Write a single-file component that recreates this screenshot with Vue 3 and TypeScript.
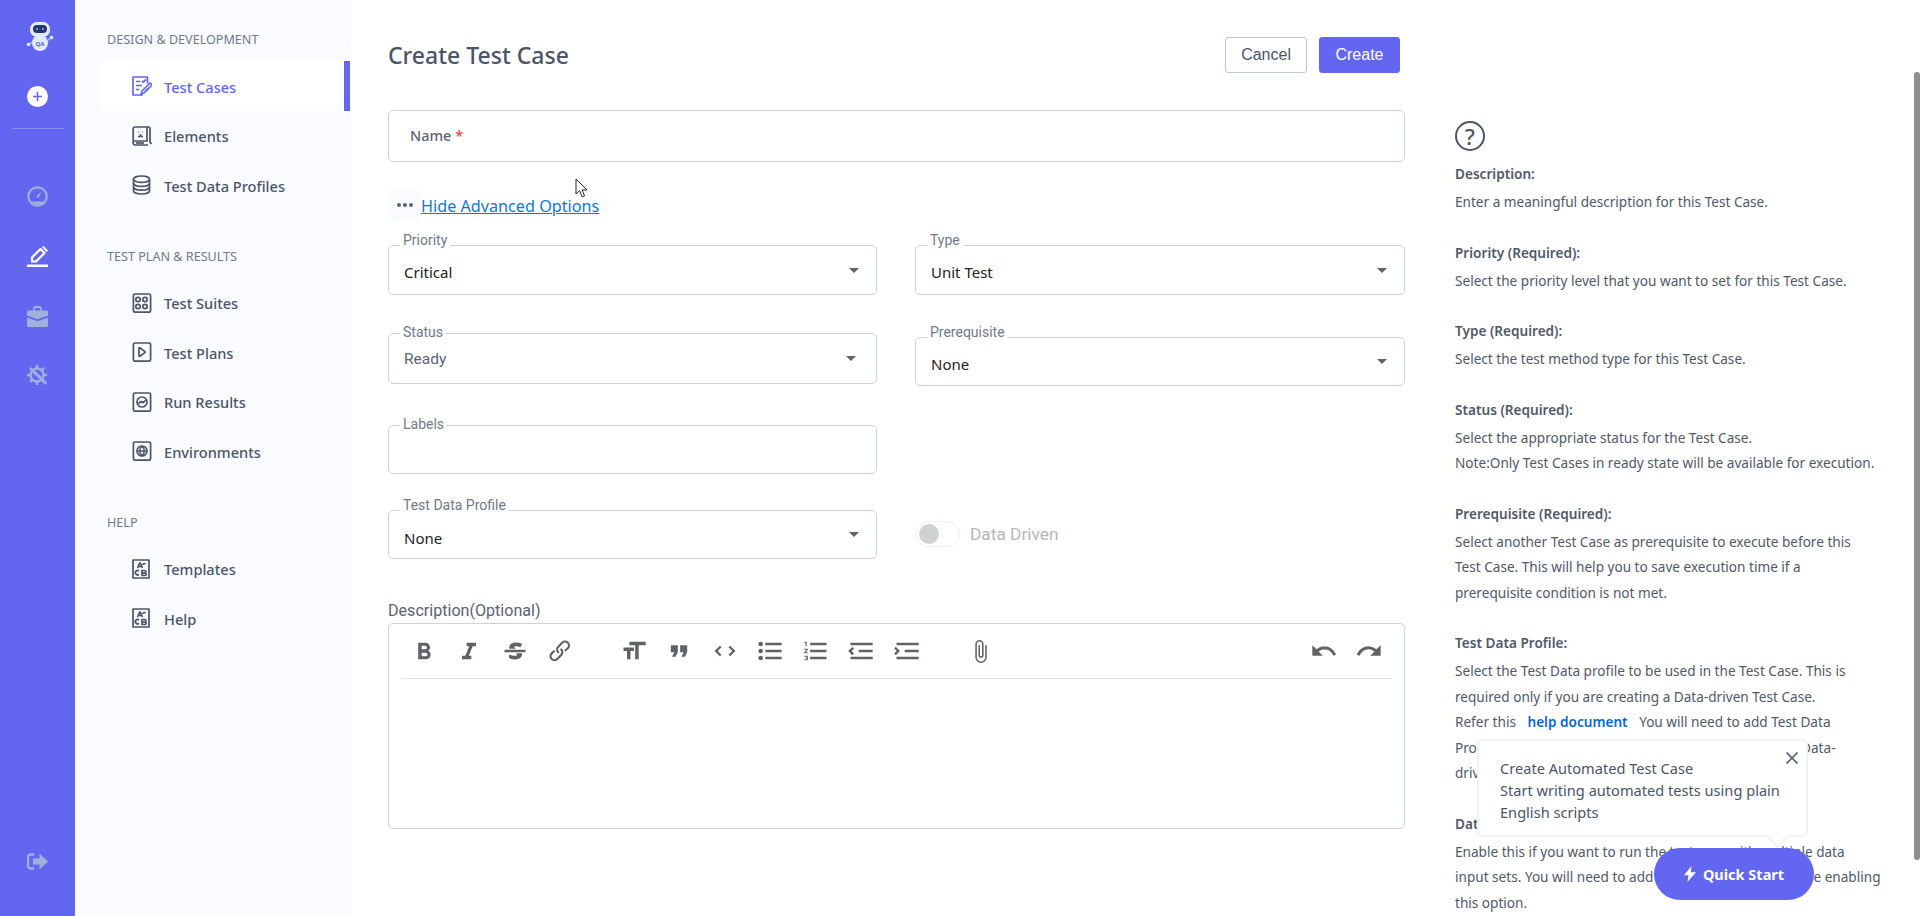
<script setup lang="ts">
interface NavItem {
  label: string
  paths: string[]
  active?: boolean
}
interface NavGroup {
  title: string
  items: NavItem[]
}

const frame = 'M3 1h14a1.6 1.6 0 0 1 1.6 1.6v15a1.6 1.6 0 0 1-1.6 1.6H3a1.6 1.6 0 0 1-1.6-1.6v-15A1.6 1.6 0 0 1 3 1z'
const sheet = ['M1 1h16v18H1z', 'M8 3.5L5.500 9M8 3.500l2.500 5.500M6.500 7.500h3', 'M13.500 5c-1-.8-2.600-.3-2.600.9', 'M7 12a2.200 2.200 0 1 0 0 3.400', 'M10 11.500h2.600a1.200 1.200 0 0 1 0 2.600H10zM10 14.100h3a1.200 1.200 0 0 1 0 2.400h-3z']

const groups: NavGroup[] = [
  {
    title: 'DESIGN & DEVELOPMENT',
    items: [
      { label: 'Test Cases', active: true, paths: ['M15.5 7.5V1H1v18h9.5', 'M4 5.5h4.5M4 9.5h6M4 13.5h3.5', 'M10 4.8l1.4 1.4 2.6-2.8', 'M9 18.5l1-3.5 8-8 2 2-8 8z', 'M13 15.5l3.5-3.5'] },
      { label: 'Elements', paths: ['M3 1h12v14H3a1.8 1.8 0 0 0-1.8 1.8V2.8A1.8 1.8 0 0 1 3 1z', 'M1.2 16.8A2 2 0 0 0 3 19h13', 'M15 1h1.5a1.5 1.5 0 0 1 1.5 1.5V16l1.5 2', 'M6 6h.6M10.5 6h.6', 'M6 10.5h5M8.5 8v2.5', 'M4 17h8'] },
      { label: 'Test Data Profiles', paths: ['M1.5 4.2C1.5 2.4 5 1 9.5 1s8 1.4 8 3.2-3.5 3.2-8 3.2-8-1.4-8-3.2z', 'M1.5 4.2v11.6c0 1.8 3.5 3.2 8 3.2s8-1.4 8-3.2V4.2', 'M1.5 8.2c0 1.8 3.5 3.2 8 3.2s8-1.4 8-3.2', 'M1.5 12c0 1.8 3.5 3.2 8 3.2s8-1.4 8-3.2'] }
    ]
  },
  {
    title: 'TEST PLAN & RESULTS',
    items: [
      { label: 'Test Suites', paths: [frame, 'M8.2 6.5a2.2 2.2 0 1 1-4.4 0 2.2 2.2 0 0 1 4.4 0z', 'M15.2 6.5a2.2 2.2 0 1 1-4.4 0 2.2 2.2 0 0 1 4.4 0z', 'M8.2 13.5a2.2 2.2 0 1 1-4.4 0 2.2 2.2 0 0 1 4.4 0z', 'M15.2 13.5a2.2 2.2 0 1 1-4.4 0 2.2 2.2 0 0 1 4.4 0z'] },
      { label: 'Test Plans', paths: [frame, 'M7 6.2v7.6c0 .5.5.7.9.4l5-3.6c.4-.3.4-.8 0-1l-5-3.8c-.4-.2-.9 0-.9.4z'] },
      { label: 'Run Results', paths: [frame, 'M15 10a5 5 0 1 1-10 0 5 5 0 0 1 10 0z', 'M6.5 11.5l2.5-2 2 1.2 2.5-2.4'] },
      { label: 'Environments', paths: [frame, 'M15 10a5 5 0 1 1-10 0 5 5 0 0 1 10 0z', 'M5 10h10M10 5c-3 3-3 7 0 10M10 5c3 3 3 7 0 10'] }
    ]
  },
  {
    title: 'HELP',
    items: [
      { label: 'Templates', paths: sheet },
      { label: 'Help', paths: sheet }
    ]
  }
]

const textTools = [
  { name: 'bold', d: 'M15.6 11.8c1-.7 1.6-1.8 1.6-2.8a4 4 0 0 0-4-4H7v14h7c2.1 0 3.7-1.7 3.7-3.8 0-1.5-.8-2.8-2.1-3.4zM10 7.5h3a1.5 1.5 0 1 1 0 3h-3v-3zm3.5 9H10v-3h3.5a1.5 1.5 0 1 1 0 3z' },
  { name: 'italic', d: 'M10 5v3h2.2l-3.4 8H6v3h8v-3h-2.2l3.4-8H18V5h-8z' },
  { name: 'strike', d: 'M12.73 14l.28.14c.26.15.45.3.57.44.12.14.18.3.18.5 0 .3-.15.56-.44.75-.3.2-.76.3-1.39.3A13.52 13.52 0 0 1 7 14.95v3.37a10.64 10.64 0 0 0 4.84.88c1.26 0 2.35-.19 3.28-.56.93-.37 1.64-.9 2.14-1.57s.74-1.45.74-2.32c0-.26-.02-.51-.06-.75h-5.21zm-5.5-4c-.08-.34-.12-.7-.12-1.1 0-1.29.52-2.3 1.58-3.02 1.05-.72 2.5-1.08 4.34-1.08 1.62 0 3.28.34 4.97 1l-1.3 2.93c-1.47-.6-2.73-.9-3.8-.9-.55 0-.96.08-1.2.26-.26.17-.38.38-.38.64 0 .27.16.52.48.74.17.12.53.3 1.05.53H7.23zM3 13h18v-2H3v2z' },
  { name: 'link', d: 'M9.88 13.7a4.3 4.3 0 0 1 0-6.07l3.37-3.37a4.26 4.26 0 0 1 6.07 0 4.3 4.3 0 0 1 0 6.06l-1.96 1.72a.91.91 0 1 1-1.3-1.3l1.97-1.71a2.46 2.46 0 0 0-3.48-3.48l-3.38 3.37a2.46 2.46 0 0 0 0 3.48.91.91 0 1 1-1.3 1.3zM4.25 19.46a4.3 4.3 0 0 1 0-6.07l1.93-1.9a.91.91 0 1 1 1.3 1.3l-1.93 1.9a2.46 2.46 0 0 0 3.48 3.48l3.37-3.38c.96-.96.96-2.52 0-3.47a.91.91 0 1 1 1.3-1.3 4.3 4.3 0 0 1 0 6.07l-3.38 3.38a4.26 4.26 0 0 1-6.07 0z' }
]
const blockTools = [
  { name: 'heading', d: 'M12 9v3H9v7H6v-7H3V9h9zM8 4h14v3h-6v12h-3V7H8V4z' },
  { name: 'quote', d: 'M6 17h3l2-4V7H5v6h3zm8 0h3l2-4V7h-6v6h3z' },
  { name: 'code', d: 'M18.2 12L15 15.2l1.4 1.4L21 12l-4.6-4.6L15 8.8l3.2 3.2zM5.8 12L9 8.8 7.6 7.4 3 12l4.6 4.6L9 15.2 5.8 12z' },
  { name: 'bullets', d: 'M4 4a2 2 0 1 0 0 4 2 2 0 0 0 0-4zm0 6a2 2 0 1 0 0 4 2 2 0 0 0 0-4zm0 6a2 2 0 1 0 0 4 2 2 0 0 0 0-4zm4 3h14v-2H8v2zm0-6h14v-2H8v2zm0-8v2h14V5H8z' },
  { name: 'numbers', d: 'M2 17h2v.5H3v1h1v.5H2v1h3v-4H2v1zm1-9h1V4H2v1h1v3zm-1 3h1.8L2 13.1v.9h3v-1H3.2L5 10.9V10H2v1zm5-6v2h14V5H7zm0 14h14v-2H7v2zm0-6h14v-2H7v2z' },
  { name: 'outdent', d: 'M3 19h19v-2H3v2zm7-6h12v-2H10v2zm-8.3-.3l2.8 2.9L6 14.2 4 12l2-2-1.4-1.5L1 12l.7.7zM3 5v2h19V5H3z' },
  { name: 'indent', d: 'M3 19h19v-2H3v2zm7-6h12v-2H10v2zm-6.9-1L1 14.2l1.4 1.4L6 12l-.7-.7-2.9-2.9L1 9.8 3.1 12zM3 5v2h19V5H3z' }
]
const attach = 'M16.5 6v11.5a4 4 0 1 1-8 0V5a2.5 2.5 0 0 1 5 0v10.5a1 1 0 1 1-2 0V6H10v9.5a2.5 2.5 0 0 0 5 0V5a4 4 0 1 0-8 0v12.5a5.5 5.5 0 0 0 11 0V6h-1.5z'
const historyTools = [
  { name: 'undo', d: 'M12.5 8c-2.6 0-5 1-6.9 2.6L2 7v9h9l-3.6-3.6A8 8 0 0 1 20 16l2.4-.8a10.5 10.5 0 0 0-10-7.2z' },
  { name: 'redo', d: 'M18.4 10.6a10.5 10.5 0 0 0-16.9 4.6L4 16a8 8 0 0 1 12.7-3.6L13 16h9V7l-3.6 3.6z' }
]
</script>

<template>
  <div class="page">
    <aside class="rail">
      <svg class="logo" viewBox="25 22 27 29" width="27" height="29">
        <circle cx="39" cy="43" r="8" fill="#e2ebfb" />
        <rect x="29" y="22" width="20" height="15" rx="7" fill="#e2ebfb" />
        <rect x="32" y="25" width="14" height="8" rx="4" fill="#27356b" />
        <circle cx="36" cy="29" r="1.1" fill="#8ea2e6" />
        <circle cx="42" cy="29" r="1.1" fill="#8ea2e6" />
        <circle cx="27.5" cy="44.5" r="1.8" fill="#e2ebfb" />
        <circle cx="50.5" cy="37.5" r="1.8" fill="#e2ebfb" />
        <path d="M28 44l4-2M50 38l-4 3" stroke="#e2ebfb" stroke-width="1" />
        <text x="39" y="46" text-anchor="middle" class="qa">QA</text>
      </svg>
      <svg class="ri plus" viewBox="0 0 21 21" width="21" height="21">
        <circle cx="10.5" cy="10.5" r="10.5" fill="#fff" />
        <path d="M10.5 6v9M6 10.5h9" stroke="#6366f1" stroke-width="1.6" />
      </svg>
      <div class="rail-rule"></div>
      <svg class="ri dash" viewBox="0 0 21 21" width="21" height="21">
        <circle cx="10.5" cy="10.5" r="9.2" fill="none" stroke="#9fb0dc" stroke-width="2.2" />
        <path d="M3.500 15.500h14c-1.500 2-4.500 3-7 3s-5.500-1-7-3z" fill="#9fb0dc" />
        <path d="M9.200 10.500l5-5-2.600 6.400z" fill="#9fb0dc" />
      </svg>
      <svg class="ri pen" viewBox="0 0 21 21" width="21" height="21">
        <path d="M5 11.500L13.500 3l4 4L9 15.500H5z" fill="none" stroke="#fff" stroke-width="2.200" stroke-linejoin="round" />
        <path d="M15 1l1.500-1 4.500 4.500-1.500 1.500z" fill="#fff" />
        <rect x="0" y="18.500" width="21" height="2.500" fill="#fff" />
      </svg>
      <svg class="ri bag" viewBox="0 0 21 21" width="21" height="21">
        <path d="M7 5V2.500A1.500 1.500 0 0 1 8.500 1h4A1.500 1.500 0 0 1 14 2.500V5" fill="none" stroke="#9fb0dc" stroke-width="1.800" />
        <path d="M1.500 4.500h18A1.500 1.500 0 0 1 21 6v3.500l-10.500 3.800L0 9.500V6a1.500 1.500 0 0 1 1.500-1.500z" fill="#9fb0dc" />
        <path d="M0 11.500l10.500 3.800L21 11.500v8A1.500 1.500 0 0 1 19.500 21h-18A1.500 1.500 0 0 1 0 19.500z" fill="#9fb0dc" />
      </svg>
      <svg class="ri gear" viewBox="0 0 21 21" width="21" height="21">
        <circle cx="10" cy="10" r="6.500" fill="none" stroke="#9fb0dc" stroke-width="2.400" />
        <path d="M10 0v3.500M10 16.500V20M0 10h3.500M16.500 10H20M3 3l2.400 2.400M14.600 14.600L17 17M3 17l2.400-2.400M14.600 5.400L17 3" stroke="#9fb0dc" stroke-width="2.600" />
        <path d="M6.500 6.500l3.500 3 8.500 8.500" stroke="#9fb0dc" stroke-width="3" stroke-linecap="round" fill="none" />
      </svg>
      <svg class="ri exit" viewBox="0 0 21 17" width="21" height="17">
        <path d="M7 1.500H3.500A2.500 2.500 0 0 0 1 4v9a2.500 2.500 0 0 0 2.500 2.500H7" fill="none" stroke="#9fb0dc" stroke-width="2.400" />
        <path d="M6 5.500h6.500V.5L21 8.500l-8.500 8v-5H6z" fill="#9fb0dc" />
      </svg>
    </aside>

    <nav class="side">
      <section v-for="g in groups" :key="g.title" class="side-group">
        <h4 class="side-title">{{ g.title }}</h4>
        <a v-for="item in g.items" :key="item.label" class="side-item" :class="{ on: item.active }">
          <svg class="side-icon" viewBox="0 0 20 20" width="20" height="20">
            <path v-for="(d, i) in item.paths" :key="i" :d="d" />
          </svg>
          <span>{{ item.label }}</span>
        </a>
      </section>
    </nav>

    <main class="main">
      <form class="form" @submit.prevent>
        <header class="head">
          <h1 class="title">Create Test Case</h1>
          <div class="actions">
            <button type="button" class="btn ghost">Cancel</button>
            <button type="button" class="btn solid">Create</button>
          </div>
        </header>

        <div class="name">Name <em>*</em></div>

        <div class="advanced">
          <span class="dots"><i></i><i></i><i></i></span>
          <a class="adv-link">Hide Advanced Options</a>
        </div>

        <div class="row row-one">
          <div class="box tall">
            <label class="lift">Priority</label>
            <span class="val low">Critical</span>
            <i class="caret"></i>
          </div>
          <div class="box tall">
            <label class="lift">Type</label>
            <span class="val low">Unit Test</span>
            <i class="caret"></i>
          </div>
        </div>

        <div class="row row-two">
          <div class="box status">
            <label>Status</label>
            <span class="val ready">Ready</span>
            <i class="caret shift"></i>
          </div>
          <div class="box prereq">
            <label class="lift">Prerequisite</label>
            <span class="val low">None</span>
            <i class="caret"></i>
          </div>
        </div>

        <div class="row row-three">
          <div class="box">
            <label>Labels</label>
          </div>
        </div>

        <div class="row row-four">
          <div class="box">
            <label class="lift">Test Data Profile</label>
            <span class="val lower">None</span>
            <i class="caret"></i>
          </div>
          <div class="toggle-line">
            <span class="toggle"><i></i></span>
            <span class="toggle-text">Data Driven</span>
          </div>
        </div>

        <div class="desc-label">Description(Optional)</div>
        <div class="editor">
          <div class="toolbar">
            <span v-for="t in textTools" :key="t.name" class="tool">
              <svg viewBox="0 0 24 24" width="28" height="28"><path :d="t.d" /></svg>
            </span>
            <span v-for="(t, i) in blockTools" :key="t.name" class="tool" :class="{ 'group-start': i === 0 }">
              <svg viewBox="0 0 24 24" width="28" height="28"><path :d="t.d" /></svg>
            </span>
            <span class="tool group-start">
              <svg viewBox="0 0 24 24" width="25" height="25"><path :d="attach" /></svg>
            </span>
            <span v-for="(t, i) in historyTools" :key="t.name" class="tool" :class="{ 'push-end': i === 0 }">
              <svg viewBox="0 0 24 24" width="28" height="28"><path :d="t.d" /></svg>
            </span>
          </div>
        </div>
      </form>

      <aside class="help">
        <div class="qmark">?</div>
        <section>
          <h5>Description:</h5>
          <p>Enter a meaningful description for this Test Case.</p>
        </section>
        <section>
          <h5>Priority (Required):</h5>
          <p>Select the priority level that you want to set for this Test Case.</p>
        </section>
        <section>
          <h5>Type (Required):</h5>
          <p>Select the test method type for this Test Case.</p>
        </section>
        <section>
          <h5>Status (Required):</h5>
          <p>Select the appropriate status for the Test Case.</p>
          <p>Note:Only Test Cases in ready state will be available for execution.</p>
        </section>
        <section>
          <h5>Prerequisite (Required):</h5>
          <p>Select another Test Case as prerequisite to execute before this</p>
          <p>Test Case. This will help you to save execution time if a</p>
          <p>prerequisite condition is not met.</p>
        </section>
        <section>
          <h5>Test Data Profile:</h5>
          <p>Select the Test Data profile to be used in the Test Case. This is</p>
          <p>required only if you are creating a Data-driven Test Case.</p>
          <p>Refer this <a class="doc">help document</a> You will need to add Test Data</p>
          <p>Profiles to your project before you will start creating a Data-</p>
          <p>driven Test Case.</p>
        </section>
        <section>
          <h5>Data Driven:</h5>
          <p>Enable this if you want to run the test case with multiple data</p>
          <p>input sets. You will need to add a Test Data Profile&nbsp;&nbsp;before enabling</p>
          <p>this option.</p>
        </section>
      </aside>
    </main>

    <div class="scroll-thumb"></div>

    <svg class="cursor" viewBox="0 0 13 20" width="13" height="20">
      <path d="M1 1v15l3.600-3.200 2.600 6 2.400-1-2.600-5.800H12z" fill="#fff" stroke="#222" stroke-width="1" />
    </svg>

    <div class="pop">
      <p>Create Automated Test Case</p>
      <p>Start writing automated tests using plain</p>
      <p>English scripts</p>
      <svg class="pop-close" viewBox="0 0 14 14" width="14" height="14">
        <path d="M1.500 1.500l11 11M12.500 1.500l-11 11" stroke="#4a5568" stroke-width="1.600" />
      </svg>
      <i class="pop-tip"></i>
    </div>
    <button type="button" class="quick">
      <svg viewBox="0 0 12 16" width="12" height="16"><path d="M7.500 0L0 9.200h4.600L3.400 16 12 6.300H6.800z" fill="#fff" /></svg>
      Quick Start
    </button>
  </div>
</template>

<style>
html,
body {
  margin: 0;
  background: #fff;
}
</style>

<style scoped>
.page {
  position: relative;
  display: flex;
  width: 1920px;
  height: 916px;
  overflow: hidden;
  background: #fff;
  font-family: "Noto Sans", sans-serif;
  color: #4a5568;
}

/* Rail */
.rail {
  flex: none;
  width: 75px;
  display: flex;
  flex-direction: column;
  align-items: center;
  padding: 22px 0 46px;
  box-sizing: border-box;
  background: #6366f1;
}
.logo {
  margin-left: 3px;
}
.qa {
  font: 700 6px "Noto Sans", sans-serif;
  fill: #5b66c8;
}
.ri {
  display: block;
  flex: none;
}
.plus {
  margin-top: 35px;
}
.rail-rule {
  flex: none;
  width: 52px;
  height: 1px;
  margin-top: 21px;
  background: #8c8ff0;
}
.dash {
  margin-top: 57px;
}
.pen {
  margin-top: 39px;
}
.bag {
  margin-top: 39px;
}
.gear {
  margin-top: 38px;
}
.exit {
  margin-top: auto;
}

/* Sidebar */
.side {
  flex: none;
  width: 275px;
  padding: 30px 0 0 25px;
  box-sizing: border-box;
  background: #fafbfe;
}
.side-group + .side-group {
  margin-top: 37px;
}
.side-title {
  margin: 0 0 11px 7px;
  font-size: 12.6px;
  line-height: 20px;
  font-weight: 400;
  color: #6f7a8a;
}
.side-item {
  display: flex;
  align-items: center;
  gap: 12px;
  height: 49.5px;
  padding: 2px 0 0 32px;
  box-sizing: border-box;
  font-size: 14.6px;
  font-weight: 500;
  color: #4a5568;
}
.side-item.on {
  background: #fff;
  color: #6366f1;
  border-right: 6px solid #6366f1;
}
.side-icon {
  flex: none;
  margin-top: -1px;
  fill: none;
  stroke: currentColor;
  stroke-width: 1.7;
  stroke-linejoin: round;
}

/* Form */
.main {
  flex: 1;
  display: flex;
  min-width: 0;
  padding: 37px 0 0 38px;
}
.form {
  flex: none;
  width: 1017px;
}
.head {
  display: flex;
  align-items: center;
  justify-content: space-between;
  height: 36px;
  padding-right: 5px;
}
.title {
  margin: 0;
  font-size: 23px;
  line-height: 36px;
  font-weight: 500;
  color: #4a5568;
}
.actions {
  display: flex;
  gap: 12px;
}
.btn {
  height: 36px;
  padding: 0 15px;
  border-radius: 3px;
  font: 400 16px "Liberation Sans", Arial, sans-serif;
  box-sizing: border-box;
}
.ghost {
  background: #fff;
  border: 1px solid #b9c9d9;
  color: #4a5568;
}
.solid {
  padding: 0 15.5px;
  background: #6366f1;
  border: 1px solid #6366f1;
  color: #fff;
}
.name {
  display: flex;
  align-items: center;
  gap: 4px;
  height: 52px;
  margin-top: 37px;
  padding: 0 0 2px 21px;
  box-sizing: border-box;
  border: 1px solid #c7d5e3;
  border-radius: 5px;
  font-size: 14.4px;
  font-weight: 500;
  color: #5b6472;
}
.name em {
  font-style: normal;
  color: #e04b4b;
}
.advanced {
  display: flex;
  align-items: center;
  height: 32px;
  margin-top: 27px;
}
.dots {
  display: flex;
  align-items: center;
  justify-content: center;
  gap: 2px;
  width: 33px;
  height: 32px;
  border-radius: 5px;
  background: #fafbfe;
}
.dots i {
  width: 4px;
  height: 4px;
  border-radius: 50%;
  background: #5b6472;
}
.adv-link {
  padding-top: 2px;
  font-size: 16.2px;
  color: #0b78d9;
  text-decoration: underline;
}
.row {
  display: grid;
  grid-template-columns: 489px 490px;
  column-gap: 38px;
  align-items: start;
}
.row-one {
  margin-top: 24px;
}
.row-two {
  margin-top: 38px;
}
.row-three {
  margin-top: 39px;
}
.row-four {
  margin-top: 36px;
}
.box {
  position: relative;
  display: flex;
  align-items: center;
  height: 49px;
  padding: 0 17px 0 15px;
  box-sizing: border-box;
  border: 1px solid #c7d5e3;
  border-radius: 5px;
  background: #fff;
}
.tall {
  height: 50px;
}
.status {
  height: 51px;
}
.prereq {
  margin-top: 4px;
}
.box label {
  position: absolute;
  top: -11px;
  left: 11px;
  padding: 0 3px;
  background: #fff;
  font: 400 14px/18px Roboto, sans-serif;
  color: #6f7a8a;
}
.box label.lift {
  top: -15px;
}
.val {
  font-size: 15px;
  color: #222;
}
.low {
  padding-top: 4px;
}
.lower {
  padding-top: 7px;
}
.ready {
  font: 400 15.500px Roboto, sans-serif;
  color: #5b6472;
}
.caret {
  width: 0;
  height: 0;
  margin-left: auto;
  border-left: 5px solid transparent;
  border-right: 5px solid transparent;
  border-top: 5px solid #5f6368;
}
.caret.shift {
  margin-right: 3px;
}
.toggle-line {
  display: flex;
  align-items: center;
  gap: 10px;
  margin-top: 11px;
}
.toggle {
  display: flex;
  align-items: center;
  width: 45px;
  height: 26px;
  padding-left: 3px;
  box-sizing: border-box;
  border: 1px solid #f0f1f3;
  border-radius: 13px;
}
.toggle i {
  width: 20px;
  height: 20px;
  border-radius: 50%;
  background: #cfd1d4;
}
.toggle-text {
  font: 400 17.300px Roboto, sans-serif;
  color: #b3b7bd;
}
.desc-label {
  margin-top: 42px;
  font: 400 16.100px/20px Roboto, sans-serif;
  color: #5b6472;
}
.editor {
  height: 206px;
  margin-top: 2px;
  padding: 0 12px;
  box-sizing: border-box;
  border: 1px solid #c7d5e3;
  border-radius: 5px;
}
.toolbar {
  display: flex;
  align-items: center;
  height: 54px;
  border-bottom: 1px solid #e2e6ea;
}
.tool {
  flex: none;
  display: flex;
  align-items: center;
  justify-content: center;
  width: 45.5px;
}
.tool svg {
  fill: #5f6368;
}
.group-start {
  margin-left: 28px;
}
.push-end {
  margin-left: auto;
}

/* Help */
.help {
  flex: none;
  width: 440px;
  margin-left: 50px;
  padding-top: 84px;
  font-size: 13.600px;
  line-height: 25.500px;
  color: #4f5968;
}
.qmark {
  width: 30px;
  height: 30px;
  margin-bottom: 10px;
  box-sizing: border-box;
  border: 2px solid #4a5568;
  border-radius: 50%;
  font-size: 22px;
  line-height: 26px;
  font-weight: 500;
  text-align: center;
  color: #4a5568;
}
.help section {
  margin-bottom: 25px;
}
.help h5 {
  margin: 0 0 2px;
  font-size: 13.600px;
  line-height: 26px;
  font-weight: 600;
}
.help p {
  margin: 0;
  white-space: nowrap;
}
.doc {
  margin: 0 8px 0 8px;
  font-weight: 600;
  color: #0c66d6;
}

/* Overlays */
.scroll-thumb {
  position: absolute;
  top: 72px;
  right: 0;
  width: 6px;
  height: 788px;
  border-radius: 3px;
  background: #8f8f8f;
}
.cursor {
  position: absolute;
  top: 178px;
  left: 575px;
}
.pop {
  position: absolute;
  left: 1477px;
  top: 739px;
  width: 331px;
  height: 98px;
  padding: 16px 0 0 21px;
  box-sizing: border-box;
  border: 2px solid #f1f2f3;
  border-radius: 5px;
  background: #fff;
  font-size: 14.600px;
  line-height: 22px;
  color: #4a5568;
}
.pop p {
  margin: 0;
}
.pop-close {
  position: absolute;
  top: 10px;
  right: 7px;
}
.pop-tip {
  position: absolute;
  right: 21px;
  bottom: -9px;
  width: 14px;
  height: 14px;
  transform: rotate(45deg);
  background: #fff;
  border-right: 2px solid #f1f2f3;
  border-bottom: 2px solid #f1f2f3;
}
.quick {
  position: absolute;
  left: 1654px;
  top: 848px;
  display: flex;
  align-items: center;
  justify-content: center;
  gap: 7px;
  width: 160px;
  height: 52px;
  border: 0;
  border-radius: 26px;
  background: #6366f1;
  color: #fff;
  font: 700 14.500px "Noto Sans", sans-serif;
}
</style>
